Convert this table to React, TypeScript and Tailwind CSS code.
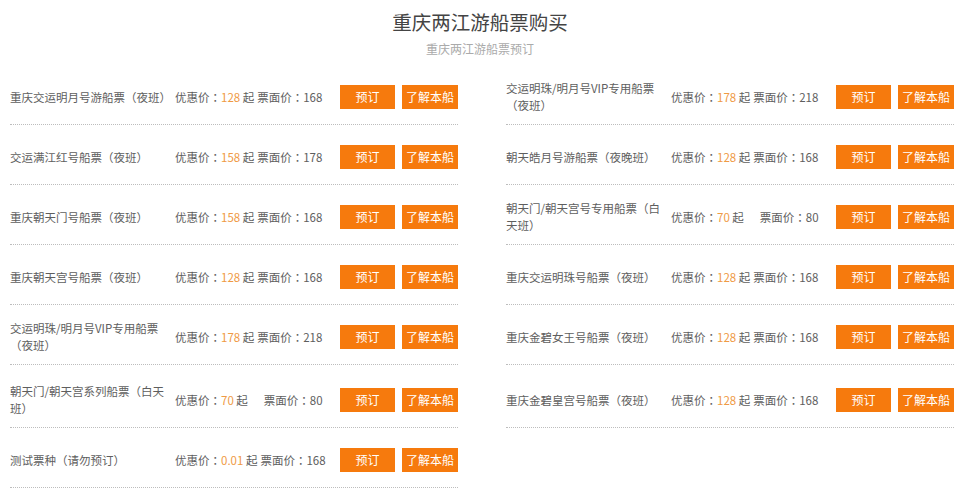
import React from "react";

interface Ticket {
  name: string;
  price: string;
  face: string;
  wide?: boolean;
  tall?: boolean;
}

const left: Ticket[] = [
  { name: "重庆交运明月号游船票（夜班）", price: "128", face: "168" },
  { name: "交运满江红号船票（夜班）", price: "158", face: "178" },
  { name: "重庆朝天门号船票（夜班）", price: "158", face: "168" },
  { name: "重庆朝天宫号船票（夜班）", price: "128", face: "168" },
  { name: "交运明珠/明月号VIP专用船票\n（夜班）", price: "178", face: "218" },
  { name: "朝天门/朝天宫系列船票（白天\n班）", price: "70", face: "80", wide: true, tall: true },
  { name: "测试票种（请勿预订）", price: "0.01", face: "168" },
];

const right: Ticket[] = [
  { name: "交运明珠/明月号VIP专用船票\n（夜班）", price: "178", face: "218" },
  { name: "朝天皓月号游船票（夜晚班）", price: "128", face: "168" },
  { name: "朝天门/朝天宫号专用船票（白\n天班）", price: "70", face: "80", wide: true },
  { name: "重庆交运明珠号船票（夜班）", price: "128", face: "168" },
  { name: "重庆金碧女王号船票（夜班）", price: "128", face: "168" },
  { name: "重庆金碧皇宫号船票（夜班）", price: "128", face: "168", tall: true },
];

// centred full-width punctuation, like the original's font
function Punct({ text }: { text: string }) {
  return (
    <>
      {text.split(/([（）：])/).map((part, i) =>
        /^[（）：]$/.test(part) ? (
          <span
            key={i}
            className="inline-block leading-[17px]"
            style={{ fontFamily: '"Noto Sans CJK TC", sans-serif' }}
          >
            {part}
          </span>
        ) : (
          part
        )
      )}
    </>
  );
}

function Row({ item }: { item: Ticket }) {
  return (
    <div
      className={`flex items-center border-b border-dotted border-[#bdbdbd] ${
        item.tall ? "h-[63px] pt-[8px]" : "h-[60px] pt-[5px]"
      }`}
    >
      <div className="w-[165px] shrink-0 text-[11.5px] leading-[17px] text-[#5e5e5e]">
        {item.name.split("\n").map((line, i) => (
          <div key={i} className="whitespace-nowrap">
            <Punct text={line} />
          </div>
        ))}
      </div>
      <div className="w-[147px] shrink-0 whitespace-nowrap text-right text-[11.5px] leading-[17px] text-[#5e5e5e]">
        <Punct text="优惠价：" />
        <span className="text-[#ef9a45]">{item.price}</span> 起
        <span className={item.wide ? "ml-[16px]" : "ml-[3px]"}>
          <Punct text="票面价：" />
          {item.face}
        </span>
      </div>
      <div className="ml-[18px] flex gap-[7px]">
        <button className="h-[24px] w-[55px] bg-[#f67a0d] text-[12px] text-white">预订</button>
        <button className="h-[24px] w-[56px] bg-[#f67a0d] text-[12px] text-white">了解本船</button>
      </div>
    </div>
  );
}

export default function App() {
  return (
    <div
      className="h-[490px] w-[960px] overflow-hidden bg-white"
      style={{ fontFamily: '"Noto Sans CJK SC", "Noto Sans", sans-serif' }}
    >
      {/* header */}
      <div className="flex flex-col items-center pt-[8px]">
        <h1 className="text-[19.5px] leading-[28px] text-[#444]">重庆两江游船票购买</h1>
        <p className="mt-[5px] text-[12px] leading-[16px] text-[#aaa]">重庆两江游船票预订</p>
      </div>

      {/* ticket list */}
      <div className="mt-[8px] grid grid-cols-[448px_448px] gap-x-[48px] pl-[10px]">
        <div>
          {left.map((item, i) => (
            <Row key={i} item={item} />
          ))}
        </div>
        <div>
          {right.map((item, i) => (
            <Row key={i} item={item} />
          ))}
        </div>
      </div>
    </div>
  );
}
